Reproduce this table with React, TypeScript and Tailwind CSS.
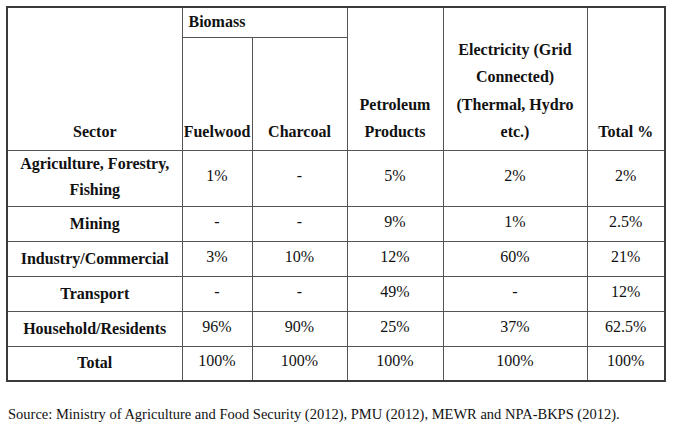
import React from 'react';

const serif = "font-['Liberation_Serif','Times_New_Roman',serif]";

const rows: { sector: React.ReactNode; cells: string[]; tall?: boolean }[] = [
  {
    sector: (
      <>
        Agriculture, Forestry,
        <br />
        Fishing
      </>
    ),
    cells: ['1%', '-', '5%', '2%', '2%'],
    tall: true,
  },
  { sector: 'Mining', cells: ['-', '-', '9%', '1%', '2.5%'] },
  { sector: 'Industry/Commercial', cells: ['3%', '10%', '12%', '60%', '21%'] },
  { sector: 'Transport', cells: ['-', '-', '49%', '-', '12%'] },
  { sector: 'Household/Residents', cells: ['96%', '90%', '25%', '37%', '62.5%'] },
  { sector: 'Total', cells: ['100%', '100%', '100%', '100%', '100%'] },
];

const App: React.FC = () => {
  return (
    <div className={`w-[676px] h-[428px] bg-white text-[#111] ${serif}`}>
      <div className="pl-[6px] pt-[6px]">
        <table className="table-fixed border-collapse border-2 border-[#3a3a3a] w-[659px] text-[16px]">
          <colgroup>
            <col className="w-[175px]" />
            <col className="w-[70px]" />
            <col className="w-[95px]" />
            <col className="w-[96px]" />
            <col className="w-[144px]" />
            <col className="w-[78px]" />
          </colgroup>
          <thead>
            <tr className="h-[30px]">
              <th rowSpan={2} className="border border-[#555] align-bottom pb-[4px] font-bold leading-[27.5px]">
                Sector
              </th>
              <th colSpan={2} className="border border-[#555] align-top text-left pl-[6px] font-bold leading-[27px]">
                Biomass
              </th>
              <th rowSpan={2} className="border border-[#555] align-bottom pb-[4px] font-bold leading-[27.5px]">
                Petroleum
                <br />
                Products
              </th>
              <th rowSpan={2} className="border border-[#555] align-bottom pb-[4px] font-bold leading-[27.5px]">
                Electricity (Grid
                <br />
                Connected)
                <br />
                (Thermal, Hydro
                <br />
                etc.)
              </th>
              <th rowSpan={2} className="border border-[#555] align-bottom pb-[4px] font-bold leading-[27.5px]">
                Total %
              </th>
            </tr>
            <tr className="h-[113px]">
              <th className="border border-[#555] align-bottom pb-[4px] font-bold leading-[27.5px] whitespace-nowrap">
                Fuelwood
              </th>
              <th className="border border-[#555] align-bottom pb-[4px] font-bold leading-[27.5px]">
                Charcoal
              </th>
            </tr>
          </thead>
          <tbody>
            {rows.map((r, i) => (
              <tr key={i} className={r.tall ? 'h-[56px]' : 'h-[35px]'}>
                <td
                  className={`border border-[#555] text-center font-bold whitespace-nowrap ${
                    r.tall ? 'leading-[26px] pb-[3px]' : 'leading-[24px]'
                  }`}
                >
                  {r.sector}
                </td>
                {r.cells.map((c, j) => (
                  <td key={j} className="border border-[#555] text-center pb-[4px] leading-[20px]">
                    {c}
                  </td>
                ))}
              </tr>
            ))}
          </tbody>
        </table>
      </div>
      <p className="pl-[8px] mt-[22px] text-[14.5px] leading-[20px]">
        Source: Ministry of Agriculture and Food Security (2012), PMU (2012), MEWR and NPA-BKPS (2012).
      </p>
    </div>
  );
};

export default App;
